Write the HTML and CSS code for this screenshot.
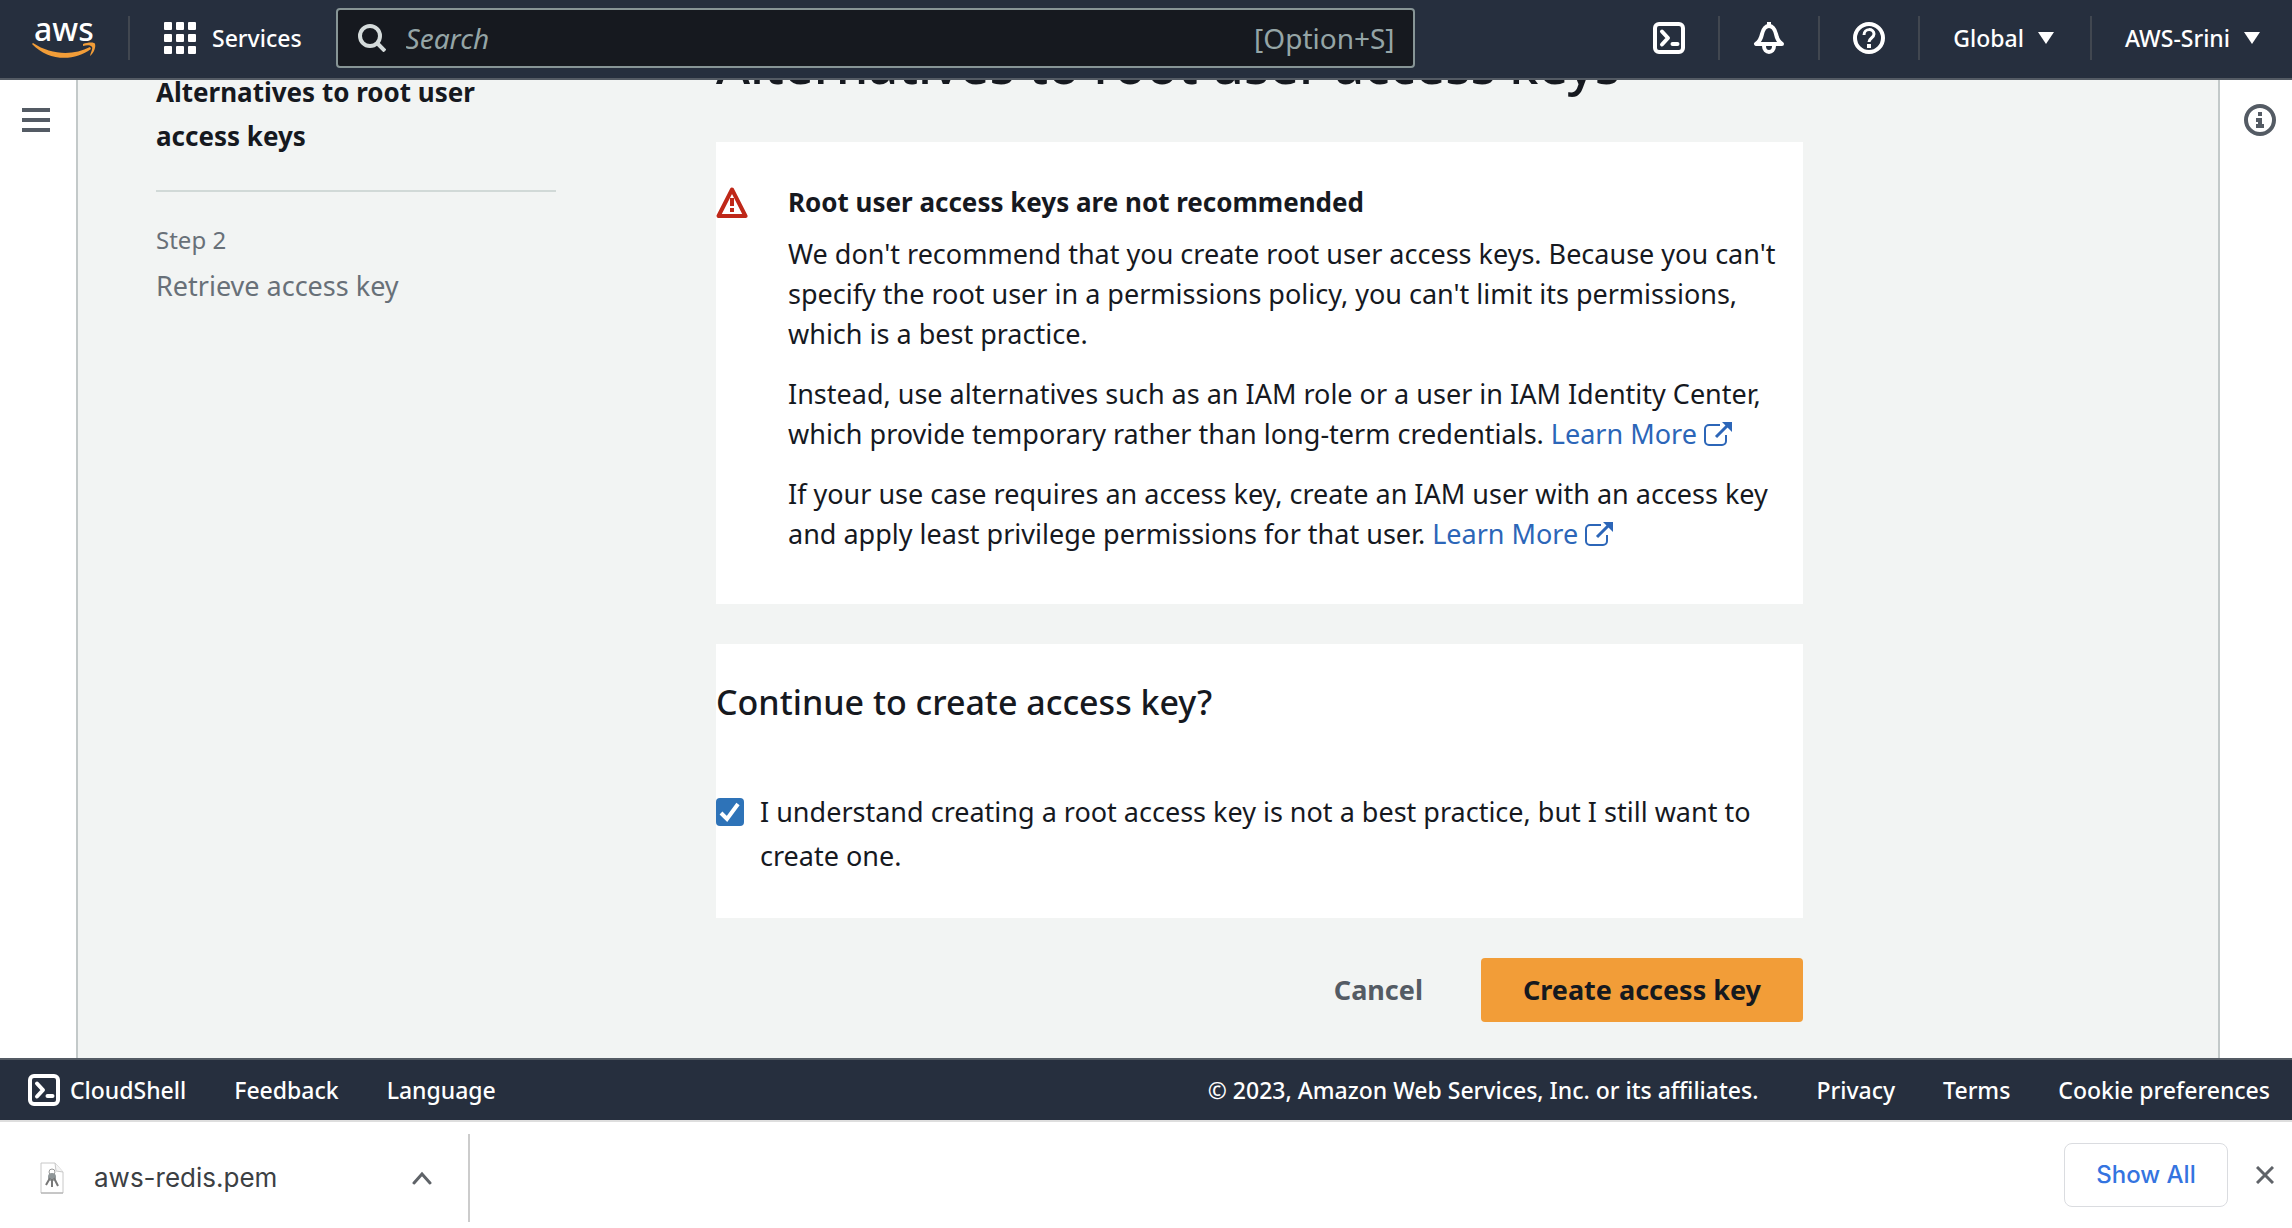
FILE: index.html
```html
<!DOCTYPE html>
<html lang="en">
<head>
<meta charset="utf-8">
<meta name="viewport" content="width=device-width, initial-scale=1">
<title>Create access key | IAM</title>
<link rel="stylesheet" href="styles.css">
</head>
<body>
<svg width="0" height="0" class="sprite" aria-hidden="true">
  <symbol id="shell" viewBox="0 0 32 32"><rect x="2" y="2" width="28" height="28" rx="4" fill="none" stroke="currentColor" stroke-width="4"/><path d="M9 9.500l6 6.500-6 6.500" fill="none" stroke="currentColor" stroke-width="4" stroke-linecap="round" stroke-linejoin="round"/><path d="M19.500 22h5" stroke="currentColor" stroke-width="4" stroke-linecap="round"/></symbol>
  <symbol id="external" viewBox="0 0 28 26"><path d="M16 4H5a4 4 0 0 0-4 4v12a4 4 0 0 0 4 4h13a4 4 0 0 0 4-4v-6" fill="none" stroke="currentColor" stroke-width="2"/><path d="M12 16L25 3" stroke="currentColor" stroke-width="3"/><path d="M18 1h10v10z" fill="currentColor"/></symbol>
</svg>

<header class="topbar">
  <a class="logo" href="#" aria-label="AWS home"><span class="logo-text">aws</span>
    <svg class="smile" viewBox="0 0 64 16"><path d="M1 1C19 13 41 14 58 5l1 2C42 20 16 19 0 2z" fill="#f29d38"/><path d="M51 2c5-2 12-2 12 0 1 3-1 9-5 12 1-4 3-8 2-9-1-2-5-2-9-1z" fill="#f29d38"/></svg>
  </a>
  <button class="services" type="button">
    <svg width="32" height="32" viewBox="0 0 32 32" fill="#fff"><rect width="8" height="8" rx="1"/><rect x="12" width="8" height="8" rx="1"/><rect x="24" width="8" height="8" rx="1"/><rect y="12" width="8" height="8" rx="1"/><rect x="12" y="12" width="8" height="8" rx="1"/><rect x="24" y="12" width="8" height="8" rx="1"/><rect y="24" width="8" height="8" rx="1"/><rect x="12" y="24" width="8" height="8" rx="1"/><rect x="24" y="24" width="8" height="8" rx="1"/></svg>
    Services
  </button>
  <label class="search">
    <svg width="28" height="28" viewBox="0 0 28 28" fill="none" stroke="#d5dbdb" stroke-width="4"><circle cx="12" cy="12" r="10"/><path d="M19 19l8 8"/></svg>
    <input type="text" placeholder="Search" aria-label="Search">
    <span class="shortcut">[Option+S]</span>
  </label>
  <nav class="tools" aria-label="Account tools">
    <button class="tool" type="button" aria-label="CloudShell"><svg width="32" height="32"><use href="#shell"/></svg></button>
    <button class="tool" type="button" aria-label="Notifications"><svg width="32" height="32" viewBox="0 0 32 32"><path d="M16 4c-4 0-6 4-7 8-1 5-3 8-6 10h26c-3-2-5-5-6-10-1-4-3-8-7-8z" fill="none" stroke="#fff" stroke-width="4" stroke-linejoin="round"/><path d="M14 0h4v4h-4z" fill="#fff"/><path d="M11 24c0 8 10 8 10 0" fill="none" stroke="#fff" stroke-width="4"/></svg></button>
    <button class="tool" type="button" aria-label="Help"><svg width="32" height="32" viewBox="0 0 32 32" fill="none" stroke="#fff" stroke-width="4"><circle cx="16" cy="16" r="14"/><path d="M11 13c0-7 10-7 10-1 0 4-5 4-5 8" stroke-width="3"/><path d="M16 22v4"/></svg></button>
    <button class="tool menu" type="button">Global <svg width="16" height="12" viewBox="0 0 16 12"><path d="M0 0h16L8 12z" fill="#fff"/></svg></button>
    <button class="tool menu" type="button">AWS-Srini <svg width="16" height="12" viewBox="0 0 16 12"><path d="M0 0h16L8 12z" fill="#fff"/></svg></button>
  </nav>
</header>

<div class="shell">
  <aside class="rail"><button type="button" aria-label="Open navigation"><svg width="28" height="24" viewBox="0 0 28 24" fill="#545b64"><path d="M0 0h28v4H0zM0 10h28v4H0zM0 20h28v4H0z"/></svg></button></aside>
  <main class="page">
    <ol class="steps">
      <li class="step current">Alternatives to root user access keys</li>
      <li class="step"><span class="step-no">Step 2</span>Retrieve access key</li>
    </ol>
    <div class="content">
      <h1>Alternatives to root user access keys</h1>
      <section class="card notice">
        <svg class="warn" width="32" height="32" viewBox="0 0 32 32"><path d="M16 3.500L29.500 30h-27z" fill="none" stroke="#bf2819" stroke-width="4" stroke-linejoin="round"/><path d="M16 12v8M16 22v4" stroke="#bf2819" stroke-width="4"/></svg>
        <div class="notice-text">
          <h2>Root user access keys are not recommended</h2>
          <p>We don't recommend that you create root user access keys. Because you can't specify the root user in a permissions policy, you can't limit its permissions, which is a best practice.</p>
          <p>Instead, use alternatives such as an IAM role or a user in IAM Identity Center, which provide temporary rather than long-term credentials. <a href="#">Learn More <svg width="28" height="26"><use href="#external"/></svg></a></p>
          <p>If your use case requires an access key, create an IAM user with an access key and apply least privilege permissions for that user. <a href="#">Learn More <svg width="28" height="26"><use href="#external"/></svg></a></p>
        </div>
      </section>
      <section class="card confirm">
        <h2>Continue to create access key?</h2>
        <div class="check">
          <input type="checkbox" id="ack" checked>
          <label for="ack">I understand creating a root access key is not a best practice, but I still want to create one.</label>
        </div>
      </section>
      <div class="actions">
        <button class="btn" type="button">Cancel</button>
        <button class="btn primary" type="button">Create access key</button>
      </div>
    </div>
  </main>
  <aside class="rail right"><button type="button" aria-label="Open help panel"><svg width="32" height="32" viewBox="0 0 32 32"><circle cx="16" cy="16" r="14" fill="none" stroke="#545b64" stroke-width="4"/><path d="M14 8h4v4h-4zM12 14h6v6h2v4h-8v-4h2v-2h-2z" fill="#545b64"/></svg></button></aside>
</div>

<footer class="footer">
  <a class="cloudshell" href="#"><svg width="32" height="32"><use href="#shell"/></svg>CloudShell</a>
  <a href="#">Feedback</a>
  <a href="#">Language</a>
  <span class="legal">© 2023, Amazon Web Services, Inc. or its affiliates.</span>
  <a href="#">Privacy</a>
  <a href="#">Terms</a>
  <a href="#">Cookie preferences</a>
</footer>

<section class="downloads" aria-label="Downloads">
  <div class="file">
    <svg width="24" height="32" viewBox="0 0 24 32"><path d="M1 1h14l8 9v21H1z" fill="#fff" stroke="#c8c8c8" stroke-width="1"/><path d="M15 1l1 8 7 1" fill="#f4f4f4" stroke="#c8c8c8"/><path d="M1 31h22" stroke="#aaa"/><circle cx="12" cy="10" r="3" fill="none" stroke="#999"/><circle cx="12" cy="15" r="4" fill="#8f9698"/><path d="M10 16l-4 7M12 17v8M14 16l4 8" stroke="#777" stroke-width="2"/></svg>
    <span class="filename">aws-redis.pem</span>
    <button type="button" aria-label="File options"><svg width="20" height="14" viewBox="0 0 20 14"><path d="M2 12l8-9 8 9" fill="none" stroke="#5f6368" stroke-width="3" stroke-linecap="round"/></svg></button>
  </div>
  <button class="show-all" type="button">Show All</button>
  <button class="close" type="button" aria-label="Close downloads"><svg width="18" height="18" viewBox="0 0 18 18"><path d="M1 1l16 16M17 1L1 17" stroke="#5f6368" stroke-width="3"/></svg></button>
</section>
</body>
</html>
```
FILE: styles.css
```css
* { box-sizing: border-box; }

body {
  margin: 0;
  min-height: 100vh;
  display: flex;
  flex-direction: column;
  background: #fff;
  color: #16191f;
  font: 27px/40px "Noto Sans", "Open Sans", sans-serif;
}

h1, h2, p, ol { margin: 0; padding: 0; }
svg { display: block; flex: none; }
.sprite { position: absolute; }
a { color: #2c66b8; text-decoration: none; }

button {
  padding: 0;
  border: 0;
  background: none;
  color: inherit;
  font: inherit;
  cursor: pointer;
}

/* Top navigation */
.topbar {
  position: relative;
  z-index: 1;
  display: flex;
  align-items: center;
  height: 80px;
  padding-bottom: 2px;
  border-bottom: 2px solid #545b64;
  background: #262f3e;
  color: #fff;
  font-size: 23px;
  font-weight: 500;
}

.logo {
  width: 130px;
  height: 44px;
  padding-left: 32px;
  border-right: 2px solid #414750;
  color: #fff;
}

.logo-text { display: block; padding-left: 2px; font-size: 32px; line-height: 26px; }
.smile { width: 64px; height: 16px; }
.services { display: flex; align-items: center; gap: 16px; padding: 0 34px; }

.search {
  display: flex;
  align-items: center;
  flex: 0 1 1079px;
  height: 60px;
  padding: 0 18px 0 20px;
  border: 2px solid #879596;
  border-radius: 4px;
  background: #16191f;
  color: #95a5a6;
  font-size: 28px;
  font-weight: 400;
}

.search input {
  flex: 1;
  min-width: 0;
  padding: 0 20px;
  border: 0;
  outline: 0;
  background: none;
  color: #fff;
  font: inherit;
}

.search input::placeholder { color: #95a5a6; font-style: italic; opacity: 1; }

.tools { display: flex; align-items: center; margin-left: auto; }

.tool {
  display: flex;
  align-items: center;
  gap: 14px;
  height: 44px;
  padding: 0 33px;
}

.tool + .tool { border-left: 2px solid #414750; }
.menu { padding-right: 36px; }
.menu:last-child { padding-right: 32px; }

/* Page frame */
.shell { flex: 1; display: flex; }

.rail {
  display: flex;
  justify-content: center;
  align-items: flex-start;
  width: 76px;
  padding: 28px 4px 0 0;
}

.right { width: 72px; padding: 24px 0 0 8px; }

.page {
  flex: 1;
  display: grid;
  grid-template-columns: 400px minmax(0, 1087px);
  gap: 160px;
  padding: 0 78px 36px;
  border: solid #c3c9c9;
  border-width: 0 2px;
  background: #f2f4f3;
}

.steps { list-style: none; }
.step { line-height: 44px; color: #687078; }

.current {
  margin-top: -10px;
  padding-bottom: 32px;
  border-bottom: 2px solid #d1d9d7;
  color: #16191f;
  font-size: 26px;
  font-weight: 700;
}

.step-no { display: block; padding: 26px 0 2px; font-size: 24px; }

h1 {
  margin-top: -52px;
  padding-bottom: 42px;
  font-size: 52px;
  line-height: 72px;
  font-weight: 500;
}

.card { background: #fff; margin-bottom: 40px; }

.notice { display: flex; gap: 40px; padding: 40px 24px 50px 0; }
.warn { margin-top: 4px; }
.notice-text h2 { margin-bottom: 12px; font-size: 26px; }
.notice p + p { margin-top: 20px; }
.notice a svg { display: inline-block; vertical-align: -3px; }

.confirm { padding: 34px 40px 40px 0; }
.confirm h2 { margin-bottom: 64px; font-size: 34px; line-height: 48px; font-weight: 500; }

.check { display: flex; gap: 16px; line-height: 44px; }

.check input {
  appearance: none;
  flex: none;
  width: 28px;
  height: 28px;
  margin: 8px 0 0;
  border-radius: 4px;
  background: #2e73b8 url("data:image/svg+xml,%3Csvg xmlns='http://www.w3.org/2000/svg' viewBox='0 0 28 28'%3E%3Cpath d='M5 15l6 6L22 6' fill='none' stroke='white' stroke-width='4'/%3E%3C/svg%3E");
}

.actions { display: flex; justify-content: flex-end; gap: 16px; }

.btn {
  height: 64px;
  padding: 0 42px;
  border-radius: 4px;
  color: #545b64;
  font-weight: 700;
}

.primary { background: #f29d38; color: #16191f; }

/* Console footer */
.footer {
  display: flex;
  align-items: center;
  gap: 48px;
  height: 62px;
  padding: 0 22px 0 28px;
  border-top: 2px solid #545b64;
  background: #262f3e;
  color: #fff;
  font-size: 23px;
  font-weight: 500;
}

.footer a { color: inherit; }
.cloudshell { display: flex; align-items: center; gap: 10px; }
.legal { margin-left: auto; margin-right: 10px; }

/* Download shelf */
.downloads {
  display: flex;
  align-items: center;
  height: 108px;
  padding-right: 18px;
  border-top: 2px solid #dedede;
  background: #fff;
  font-family: Inter, Roboto, sans-serif;
}

.file {
  display: flex;
  align-items: center;
  width: 470px;
  height: 88px;
  padding: 0 36px 0 40px;
  margin-top: 6px;
  border-right: 2px solid #ccc;
  color: #3c4043;
  font-size: 26px;
}

.filename { flex: 1; padding-left: 30px; }

.show-all {
  width: 164px;
  height: 64px;
  margin-left: auto;
  border: 1px solid #dadce0;
  border-radius: 8px;
  color: #3474e0;
  font-size: 24px;
  font-weight: 500;
}

.close { margin-left: 28px; }
```
